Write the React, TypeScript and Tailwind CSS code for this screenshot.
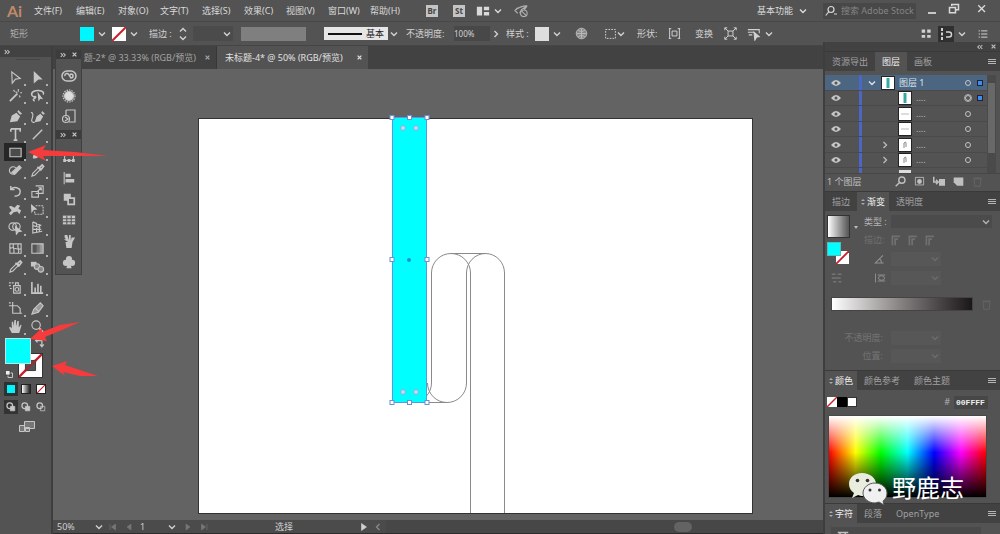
import { FC, ReactNode } from 'react'
import clsx from 'clsx'

interface IconProps {
  className?: string
  children?: ReactNode
}

const Icon: FC<IconProps> = ({ className = 'size-4', children }) => (
  <svg viewBox="0 0 16 16" className={clsx('shrink-0', className)} fill="none" stroke="currentColor" strokeWidth="1.2" aria-hidden="true">
    {children}
  </svg>
)

const Chevron: FC<{ className?: string }> = ({ className }) => (
  <svg viewBox="0 0 8 8" className={clsx('size-2 shrink-0', className)} fill="none" stroke="currentColor" strokeWidth="1.4" aria-hidden="true">
    <path d="M1 2.5l3 3 3-3" />
  </svg>
)

const DoubleChevron: FC<{ className?: string }> = ({ className }) => (
  <svg viewBox="0 0 8 8" className={clsx('size-1.5 shrink-0', className)} fill="none" stroke="currentColor" strokeWidth="1.4" aria-hidden="true">
    <path d="M1 1.5l2.500 2.500L1 6.500M4.500 1.500L7 4 4.500 6.500" />
  </svg>
)

const Cross: FC = () => (
  <svg viewBox="0 0 8 8" className="size-[5px] shrink-0" stroke="currentColor" strokeWidth="2" aria-hidden="true">
    <path d="M1 1l6 6M7 1L1 7" />
  </svg>
)

const MenuLines: FC<{ label: string }> = ({ label }) => (
  <button aria-label={label} className="ml-auto mr-1 text-[#b5b5b5]">
    <svg viewBox="0 0 8 8" className="size-2" stroke="currentColor" strokeWidth="1" aria-hidden="true">
      <path d="M0 1.5h8M0 3.5h8M0 5.5h8" />
    </svg>
  </button>
)

const NoneSwatch: FC<{ className?: string }> = ({ className }) => (
  <svg viewBox="0 0 14 14" className={clsx('block bg-white', className)} aria-hidden="true">
    <path d="M0 14L14 0" stroke="#c8202c" strokeWidth="2" />
  </svg>
)

interface SelectBoxProps {
  label: string
  value: string
  className?: string
}

const SelectBox: FC<SelectBoxProps> = ({ label, value, className }) => (
  <span className={clsx('relative block shrink-0', className)}>
    <select aria-label={label} className="block h-full w-full appearance-none bg-transparent pl-1 outline-none">
      <option>{value}</option>
    </select>
    <Chevron className="pointer-events-none absolute right-0.5 top-1/2 -translate-y-1/2" />
  </span>
)

const menus = ['文件(F)', '编辑(E)', '对象(O)', '文字(T)', '选择(S)', '效果(C)', '视图(V)', '窗口(W)', '帮助(H)']

const MenuBar = () => (
  <header className="flex h-[22px] shrink-0 items-center border-b border-[#484848] text-[#dadada]">
    <span className="w-[30px] pl-[7px] font-[Lato] text-base font-bold leading-5 text-[#c08a68]">Ai</span>
    <nav className="flex">
      {menus.map((menu) => (
        <button key={menu} className="w-[42px] whitespace-nowrap pl-1 text-left">{menu}</button>
      ))}
    </nav>
    <div className="ml-[18px] flex items-center">
      <button className="mr-[15px] size-3 bg-[#c4c4c4] text-[8px] font-bold leading-3 text-[#444]">Br</button>
      <button className="mr-[11px] size-3 bg-[#c4c4c4] text-[8px] font-bold leading-3 text-[#444]">St</button>
      <button aria-label="排列文档" className="flex items-center gap-1">
        <Icon className="size-[14px]">
          <path d="M1 3h6v10H1zM9 3h6v4H9zM9 9h6v4H9z" fill="currentColor" stroke="none" />
        </Icon>
        <Chevron />
      </button>
      <button aria-label="GPU 性能" className="ml-3 text-[#b0b0b0]">
        <Icon className="size-[15px]">
          <path d="M1 8c3-3 8-5 13-5M4 5L1 8l3 3M6 11l2-4 6-4-3 4" />
          <circle cx="10.500" cy="11" r="3.500" />
          <path d="M8 8.500l5 5" />
        </Icon>
      </button>
    </div>
    <button className="ml-auto flex items-center gap-1.5">基本功能 <Chevron /></button>
    <label className="ml-4 flex h-4 w-[93px] items-center bg-[#484848] pl-0.5">
      <Icon className="size-3">
        <circle cx="8" cy="6" r="4" strokeWidth="1.6" />
        <path d="M5 9l-4 5M12 12h4" strokeWidth="1.6" />
      </Icon>
      <input aria-label="搜索" placeholder="搜索 Adobe Stock" className="ml-1 w-[74px] bg-transparent text-[9px] outline-none placeholder:text-[#848484]" />
    </label>
    <div className="ml-3 flex w-[72px] items-center gap-3">
      <button aria-label="最小化" className="pt-1"><span className="block h-0.5 w-2 bg-[#c8c8c8]" /></button>
      <button aria-label="还原" className="pb-1"><Icon className="size-3"><path d="M5 4V2h9v7h-3M2 6h8v7H2z" strokeWidth="2" /></Icon></button>
      <button aria-label="关闭" className="ml-1 pb-1"><Icon className="size-3"><path d="M3 3l9 9M12 3l-9 9" strokeWidth="1.8" /></Icon></button>
    </div>
  </header>
)

const OptionsBar = () => (
  <div className="flex h-6 shrink-0 items-center border-b border-[#454545] text-[#d2d2d2]">
    <span className="w-[80px] pl-2.5 text-[#b0b0b0]">矩形</span>
    <button aria-label="填色" className="flex w-8 items-center gap-1"><span className="size-[14px] bg-[#00f6ff]" /><Chevron /></button>
    <button aria-label="描边颜色" className="flex w-[37px] items-center gap-1"><NoneSwatch className="size-[14px]" /><Chevron /></button>
    <span className="w-[28px] whitespace-nowrap">描边 :</span>
    <button aria-label="描边粗细步进" className="flex w-3 flex-col items-center"><Chevron className="rotate-180" /><Chevron /></button>
    <SelectBox label="描边粗细" value="" className="ml-1 h-[15px] w-[40px] bg-[#4b4b4b]" />
    <span className="ml-2 mr-[18px] h-[14px] w-[65px] bg-[#7f7f7f]" />
    <button className="flex h-[13px] w-16 items-center gap-1 bg-[#e6e6e6] px-1 text-[#222]">
      <span className="h-0.5 flex-1 bg-[#111]" />基本
    </button>
    <Chevron className="ml-0.5 mr-2" />
    <span className="w-12 whitespace-nowrap">不透明度:</span>
    <input aria-label="不透明度" defaultValue="100%" className="h-[15px] w-9 bg-[#484848] text-[8px] outline-none" />
    <Chevron className="ml-0.5 -rotate-90" />
    <span className="ml-1.5 w-[29px]">样式 :</span>
    <button aria-label="图形样式" className="flex items-center gap-1"><span className="size-[14px] bg-[#dedede]" /><Chevron /></button>
    <button aria-label="重新着色" className="ml-[14px] text-[#b8b8b8]">
      <Icon className="size-[13px]">
        <circle cx="8" cy="8" r="6.500" fill="#8a8a8a" />
        <path d="M8 2v12M2 8h12M4 4c3 2 5 2 8 0M4 12c3-2 5-2 8 0" />
      </Icon>
    </button>
    <button aria-label="对齐" className="ml-4 flex items-center">
      <Icon className="size-[13px]"><path d="M2 3h12v11H2z" strokeDasharray="2 1.500" /></Icon><Chevron />
    </button>
    <span className="ml-3 w-[31px] whitespace-nowrap">形状:</span>
    <Icon className="size-[13px]"><path d="M1 2h3M12 2h3M1 14h3M12 14h3M2 2v12M14 2v12" /><path d="M5 5h6v6H5z" /></Icon>
    <span className="ml-3.5 w-[29px]">变换</span>
    <Icon className="size-[13px]"><path d="M5 5h6v6H5zM1 1l4 4M15 1l-4 4M1 15l4-4M15 15l-4-4M1 4V1h3M12 1h3v3M1 12v3h3M12 15h3v-3" /></Icon>
    <button aria-label="选择类似对象" className="ml-2.5 flex items-center gap-1">
      <Icon className="size-[14px]"><path d="M1 6h7M1 3h13v4M2 9h4" /><path d="M8 6l6 5-3 .5L9 15z" fill="currentColor" /></Icon><Chevron />
    </button>
    <div className="ml-auto flex items-center pb-1 pt-1">
      <Icon className="size-[11px]"><path d="M1 2h5v5H1zM9 2h5v5H9zM1 10h5v4H1zM9 10h5v4H9z" fill="currentColor" stroke="none" /></Icon>
      <button aria-label="对齐像素" className="ml-1.5 size-4 bg-[#303030]">
        <Icon><path d="M4 2v12" strokeWidth="2" strokeDasharray="3 1.500" /><path d="M8 6h3a2 2 0 010 5H8" strokeWidth="1.5" /></Icon>
      </button>
      <Chevron className="ml-1" />
      <span className="ml-3 mr-3"><Icon className="size-[10px]"><path d="M1 3h2M5 3h10M1 8h2M5 8h10M1 13h2M5 13h10" strokeWidth="1.6" /></Icon></span>
    </div>
  </div>
)

interface Tool {
  name: string
  icon: ReactNode
  active?: boolean
}

const solid = { fill: 'currentColor', stroke: 'none' }

const toolGroups: Tool[][] = [
  [
    { name: '选择工具', icon: <path d="M4 2l9 7-5 .7L4.500 14z" /> },
    { name: '直接选择工具', icon: <path d="M4 1l9.500 9H9l-5 4.500z" {...solid} /> },
    { name: '魔棒工具', icon: <><path d="M2 14l8-8" strokeWidth="1.8" /><path d="M11 1v3M13 5h2M6 2l1 2M12 8l1 2M8 4l2 1" /></> },
    { name: '套索工具', icon: <><path d="M5 10C0 8 1 4 6 3s10 1 8 4M4 10c2-2 3 0 1 1s-2 2 0 3" strokeWidth="1.6" /><path d="M8 4l6 8-3-.5-2 3z" {...solid} /></> },
  ],
  [
    { name: '钢笔工具', icon: <path d="M2 14l2-7 5-3 4 4-3 5zM10 3l1-2 4 4-2 1z" {...solid} /> },
    { name: '曲率工具', icon: <><path d="M5 14l2-6 4-3 3 3-3 5zM12 4l1-2 3 3-2 1z" {...solid} /><path d="M1 4c3-1 2 5 1 7s1 4 3 3" /></> },
    { name: '文字工具', icon: <path d="M3 2h10v3M3 5V2M8 2v12M6 14h4" strokeWidth="1.7" /> },
    { name: '直线段工具', icon: <path d="M3 13L13 3" strokeWidth="1.5" /> },
    { name: '矩形工具', icon: <path d="M2 3.500h12v9H2z" fill="#4b4b4b" />, active: true },
    { name: '画笔工具', icon: <path d="M3 14c0-4 2-5 4-4l6-8 2 1-6 9c-1 2-3 3-6 2z" {...solid} /> },
    { name: 'Shaper 工具', icon: <><circle cx="5.500" cy="8" r="4" /><path d="M4 10l3 2 7-7-2-2z" fill="currentColor" /></> },
    { name: '橡皮擦工具', icon: <><path d="M2 14l1-3 6-6 2 2-6 6z" /><path d="M8 4l4 4M10 5l3-3 1.500 1.500L12 7z" strokeWidth="1.8" /></> },
  ],
  [
    { name: '旋转工具', icon: <path d="M3 2v4h4M3 6c3-4 10-2 10 2s-3 5-6 5" strokeWidth="1.5" /> },
    { name: '比例缩放工具', icon: <path d="M2 8h7v6H2zM6 2h8v8H6M8 8l4-4M9 4h3v3" /> },
    { name: '宽度工具', icon: <path d="M1 5c3-2 4 1 6 1l3-3 3 1-2 3 3 2-2 4-2-3-4 1-3 3-2-2 3-3z" {...solid} /> },
    { name: '自由变换工具', icon: <><path d="M1 2l7 6-4 .5L1.500 12z" {...solid} /><path d="M6 4h8v9H5V9" strokeDasharray="2 1" /></> },
    { name: '形状生成器工具', icon: <><circle cx="5" cy="7" r="4" /><circle cx="9" cy="7" r="4" /><path d="M8 7l6 5-3 .5L9 15z" fill="currentColor" /></> },
    { name: '透视网格工具', icon: <path d="M3 2v12l10-2M3 2l9 4M3 6l8 2M3 10h9M7 3v10M10 5v7" /> },
  ],
  [
    { name: '网格工具', icon: <path d="M2 3h12v10H2zM2 8c4-3 8 3 12 0M6 3c-2 4 2 6 0 10M11 3c-2 4 2 6 0 10" /> },
    { name: '渐变工具', icon: <><path d="M2 3h6v10H2z" fill="#555" stroke="none" /><path d="M7 3h3v10H7z" fill="#777" stroke="none" /><path d="M10 3h4v10h-4z" fill="#999" stroke="none" /><path d="M2 3h12v10H2z" /></> },
    { name: '吸管工具', icon: <><path d="M2 14l1-3 6-6 2 2-6 6z" /><path d="M8 4l4 4M10 5l3-3 1.500 1.500L12 7z" strokeWidth="1.800" /></> },
    { name: '混合工具', icon: <><path d="M1 3h6v5H1z" {...solid} /><circle cx="7.500" cy="8" r="3" fill="#888" /><circle cx="11.500" cy="11" r="3" fill="#888" /></> },
  ],
  [
    { name: '符号喷枪工具', icon: <><path d="M6 6h7v8H6zM8 6V3h3v3" /><circle cx="9.500" cy="10" r="2" /><path d="M1 3h2M4 3h2M1 6h2M2 9h2" /></> },
    { name: '柱形图工具', icon: <path d="M2 2v12h12M5.500 13V8M8.500 13V4M11.500 13V6" strokeWidth="1.700" /> },
  ],
  [
    { name: '画板工具', icon: <path d="M5 1v12h10M1 5h9l3 3v5M1 2h2" /> },
    { name: '切片工具', icon: <path d="M2 14l2-5 7-7 3 3-5 7zM6 8l3 3" fill="#999" /> },
    { name: '抓手工具', icon: <path d="M4 15L1 9l1.500-.5L4 10V3h1.500v5L7 1h1.500v7L10 2h1.500v7l2-3 1 .5L12 15z" {...solid} /> },
    { name: '缩放工具', icon: <><circle cx="6.500" cy="6.500" r="4.500" /><path d="M10 10l4 4" strokeWidth="2" /></> },
  ],
]

const ToolButton: FC<{ tool: Tool }> = ({ tool }) => (
  <button aria-label={tool.name} className={clsx('relative flex h-[18px] w-[22px] items-center justify-center', tool.active && 'bg-[#262626]')}>
    <Icon className="size-[15px]">{tool.icon}</Icon>
    <span className="absolute bottom-0 right-0 size-0.5 bg-[#b0b0b0]" />
  </button>
)

const Toolbox = () => (
  <aside className="flex w-[53px] shrink-0 flex-col border-r-2 border-[#3e3e3e] text-[#c6c6c6]">
    <div className="flex h-[11px] shrink-0 items-center bg-[#424242] pl-1"><DoubleChevron /></div>
    <div className="mb-2 ml-4 mt-0.5 h-px w-6 bg-[#464646]" />
    <div className="flex flex-col gap-[3px] pl-1">
      {toolGroups.map((group) => (
        <div key={group[0].name} className="grid w-11 grid-cols-2">
          {group.map((tool) => <ToolButton key={tool.name} tool={tool} />)}
        </div>
      ))}
    </div>
    <div className="relative ml-[5px] mt-[3px] h-10 w-10">
      <button aria-label="描边" className="absolute bottom-0 right-0.5 size-[25px] border border-[#333] bg-white">
        <svg viewBox="0 0 25 25" className="block size-full" aria-hidden="true">
          <path d="M0 25L25 0" stroke="#c8202c" strokeWidth="2.500" />
          <path d="M7 7h11v11H7z" fill="#535353" stroke="#333" />
          <path d="M7 18L18 7" stroke="#9c2b32" strokeWidth="2.500" />
        </svg>
      </button>
      <button aria-label="填色" className="absolute left-0 top-0 size-[26px] border border-[#b8e8e8] bg-[#00ffff]" />
      <button aria-label="互换填色和描边" className="absolute right-0 top-0"><Icon className="size-[10px]"><path d="M2 4h9v9M4 1L1 4l3 3M8 10l3 4 3-4" strokeWidth="2" /></Icon></button>
      <button aria-label="默认填色和描边" className="absolute bottom-0 left-0"><Icon className="size-2"><path d="M6 6h9v9H6z" strokeWidth="2" /><path d="M1 1h9v9H1z" fill="#eee" stroke="#222" /></Icon></button>
    </div>
    <div className="mt-1 flex gap-px pl-1">
      <button aria-label="颜色" className="size-[14px] bg-[#303030] p-[3px]"><span className="block size-full bg-[#00f6ff]" /></button>
      <button aria-label="渐变" className="size-[14px] p-0.5"><span className="block size-full border border-[#222] bg-linear-to-r from-white to-[#222]" /></button>
      <button aria-label="无" className="size-[14px] p-0.5"><NoneSwatch className="size-full border border-[#222]" /></button>
    </div>
    <div className="mt-1 flex gap-px pl-1">
      {['正常绘图', '背面绘图', '内部绘图'].map((mode, i) => (
        <button key={mode} aria-label={mode} className={clsx('size-[14px] p-0.5', i === 0 && 'bg-[#333]')}>
          <Icon className="size-[10px]"><circle cx="6" cy="6" r="4.500" strokeWidth="2" /><path d="M7 7h7v7H7z" fill={i === 2 ? 'none' : 'currentColor'} /></Icon>
        </button>
      ))}
    </div>
    <button aria-label="更改屏幕模式" className="ml-[18px] mt-1.5">
      <svg viewBox="0 0 18 13" className="h-[13px] w-[18px]" fill="#777" stroke="currentColor" aria-hidden="true">
        <path d="M6.500 1.500h10v7h-10zM1.500 5.500h5v6h-5zM7.500 7.500h4v4h-4z" />
      </svg>
    </button>
  </aside>
)

const dockTop: Tool[] = [
  { name: '库', icon: <><rect x="1" y="3" width="14" height="10" rx="5" strokeWidth="1.5" /><path d="M4 8a2 2 0 014-1l2 3a2 2 0 000-4L8 8" strokeWidth="1.5" /></> },
  { name: '外观', icon: <><circle cx="8" cy="8" r="6" strokeDasharray="1.500 1" /><circle cx="8" cy="8" r="4.500" fill="#ddd" /></> },
  { name: '资源', icon: <><path d="M5 2h9v12H8M5 2v6" /><circle cx="5" cy="11" r="3.500" /><path d="M4 9l3 2-3 2" /></> },
]

const dockBottom: Tool[] = [
  { name: '变换', icon: <path d="M3 4h10v8H3zM2 3h2v2H2zM12 3h2v2h-2zM2 11h2v2H2zM12 11h2v2h-2zM7 3h2v2H7zM7 11h2v2H7z" /> },
  { name: '对齐', icon: <><path d="M2.500 1v14" /><path d="M4 3h6v4H4zM4 9h10v4H4z" {...solid} /></> },
  { name: '路径查找器', icon: <><path d="M2 2h8v8H2z" {...solid} /><path d="M7 7h7v7H7z" fill="#555" strokeWidth="2" /></> },
  { name: '色板', icon: <><path d="M1 3h14v10H1z" {...solid} /><path d="M1 6.500h14M1 10h14M5.500 3v10M10.500 3v10" stroke="#555" /></> },
  { name: '画笔', icon: <path d="M4 9h8l-1 7H5zM7 9L3 4V1h3l2 6V1h2v7l1-4h4l-3 5M2 6h3l2 3z" {...solid} /> },
  { name: '符号', icon: <><circle cx="8" cy="4.500" r="3.500" {...solid} /><circle cx="4.500" cy="9" r="3.500" {...solid} /><circle cx="11.500" cy="9" r="3.500" {...solid} /><path d="M7 8h2l2 7H5z" {...solid} /></> },
]

const DockHeader = () => (
  <div className="flex h-[9px] items-center justify-between bg-[#3c3c3c] px-1">
    <DoubleChevron /><Cross />
  </div>
)

const Dock = () => (
  <div className="absolute left-0.5 top-[3px] flex w-[27px] flex-col border border-[#404040] bg-[#535353] text-[#c6c6c6]">
    <DockHeader />
    <div className="flex flex-col items-center gap-1 pb-1.5 pt-[9px]">
      {dockTop.map((item) => <button key={item.name} aria-label={item.name} className="flex h-4 items-center"><Icon>{item.icon}</Icon></button>)}
    </div>
    <DockHeader />
    <div className="flex flex-col items-center gap-[5px] pb-1 pt-[10px]">
      {dockBottom.map((item) => <button key={item.name} aria-label={item.name} className="flex h-4 items-center"><Icon className="size-[14px]">{item.icon}</Icon></button>)}
    </div>
  </div>
)

const handles = [[194.5, -0.5], [212, -0.5], [229.5, -0.5], [194.5, 141.5], [229.5, 141.5], [194.5, 284.5], [212, 284.5], [229.5, 284.5]]
const widgets = [[205, 10], [218, 10], [205, 274], [218, 274]]

const Artboard = () => (
  <svg width="555" height="396" viewBox="0 0 555 396" className="absolute left-[145px] top-[49px] overflow-visible" role="img" aria-label="画板 1">
    <rect x="0.5" y="0.5" width="554" height="395" fill="#fff" stroke="#333" />
    <g fill="none" stroke="#8a8a8a">
      <path d="M229.500 265A19.500 19.500 0 0 0 268.500 265V155A19 19.500 0 0 1 306.500 155V395" />
      <path d="M272.500 395V155A19.500 19.500 0 0 0 233.500 155V265A19.500 19.500 0 0 1 214 284.500" />
      <path d="M214 284.500H249M253 135.500H288" />
    </g>
    <rect x="194.500" y="-0.500" width="34" height="285" fill="#00ffff" stroke="#4f9ce0" />
    {handles.map(([x, y]) => <rect key={`${x} ${y}`} x={x - 2.5} y={y - 2} width="4" height="4" fill="#fff" stroke="#6f8fd0" />)}
    {widgets.map(([x, y]) => <circle key={`${x} ${y}`} cx={x} cy={y} r="2.500" fill="#b8dcf4" stroke="#7cb4e0" />)}
    <circle cx="211" cy="142" r="2" fill="#1894d8" />
  </svg>
)

const DocumentArea = () => (
  <main className="relative flex min-w-0 flex-1 flex-col">
    <div className="flex h-[23px] shrink-0 bg-[#424242] text-[#a4a4a4]">
      <div className="flex w-[164px] items-center justify-end border-r border-[#383838] pr-1.5">
        <button className="whitespace-nowrap">题-2* @ 33.33% (RGB/预览)</button>
        <button aria-label="关闭" className="ml-[9px]"><Cross /></button>
      </div>
      <div className="flex w-[151px] items-center bg-[#535353] pl-2 text-[#e2e2e2]">
        <button className="whitespace-nowrap">未标题-4* @ 50% (RGB/预览)</button>
        <button aria-label="关闭" className="ml-auto mr-1.5"><Cross /></button>
      </div>
    </div>
    <div className="relative min-h-0 flex-1 overflow-hidden bg-[#636363]">
      <Artboard />
    </div>
    <footer className="flex h-[14px] shrink-0 items-center border-b border-[#2c2c2c] bg-[#4b4b4b] text-[#d0d0d0]">
      <SelectBox label="缩放" value="50%" className="h-3 w-[52px] text-[9px]" />
      <div className="flex w-[31px] justify-center gap-2 text-[#777]">
        <button aria-label="首项"><Icon className="size-2"><path d="M2 2v12M13 2v12L5 8z" fill="currentColor" /></Icon></button>
        <button aria-label="上一项"><Icon className="size-2"><path d="M12 2v12L4 8z" fill="currentColor" /></Icon></button>
      </div>
      <SelectBox label="画板" value="1" className="h-3 w-[42px] text-[9px]" />
      <div className="flex w-9 justify-center gap-2 text-[#777]">
        <button aria-label="下一项"><Icon className="size-2"><path d="M4 2v12l8-6z" fill="currentColor" /></Icon></button>
        <button aria-label="末项"><Icon className="size-2"><path d="M3 2v12l8-6zM14 2v12" fill="currentColor" /></Icon></button>
      </div>
      <span className="ml-[61px] w-[85px]">选择</span>
      <button aria-label="状态"><Icon className="size-2"><path d="M3 1v14l10-7z" fill="currentColor" /></Icon></button>
      <Chevron className="ml-1.5 rotate-90 text-[#888]" />
      <div className="ml-1 flex h-full flex-1 items-center bg-[#474747]">
        <span className="flex-11" />
        <span className="h-2.5 w-[18px] rounded-full bg-[#636363]" />
        <span className="flex-5" />
      </div>
    </footer>
    <Dock />
  </main>
)

const PanelTabs: FC<{ tabs: string[]; active: number; grip?: boolean }> = ({ tabs, active, grip }) => (
  <div className="flex h-5 shrink-0 items-center border-t border-[#3a3a3a] bg-[#424242] text-[#a0a0a0]">
    {tabs.map((tab, i) => (
      <button key={tab} className={clsx('flex h-full items-center gap-0.5 whitespace-nowrap', i === active ? 'bg-[#535353] text-[#efefef]' : '', i === active && grip ? 'px-1' : 'px-[7px]')}>
        {i === active && grip && <svg viewBox="0 0 4 8" className="h-2 w-1" fill="#aaa" aria-hidden="true"><path d="M0 3l2-2 2 2zM0 5l2 2 2-2z" /></svg>}
        {tab}
      </button>
    ))}
    <MenuLines label="面板菜单" />
  </div>
)

const layers = [
  { name: '图层 1', art: 'bar', root: true, square: true },
  { name: '....', art: 'bar', square: true },
  { name: '....', art: 'line' },
  { name: '....', art: 'line' },
  { name: '....', art: 'curve', group: true },
  { name: '....', art: 'curve', group: true },
]

const Thumb: FC<{ art: string }> = ({ art }) => (
  <svg viewBox="0 0 12 12" className="size-3 shrink-0 bg-white outline outline-[#222]" aria-hidden="true">
    {art === 'bar' && <path d="M6 1v10" stroke="#35aaa0" strokeWidth="3" />}
    {art === 'line' && <path d="M2 6h8" stroke="#bbb" />}
    {art === 'curve' && <path d="M5 9V4q2-2 2 0v4" stroke="#888" fill="none" />}
  </svg>
)

const LayersPanel = () => (
  <section>
    <PanelTabs tabs={['资源导出', '图层', '画板']} active={1} />
    <div className="mt-1 flex h-[99px] overflow-hidden border-b border-[#474747]">
      <ul className="flex-1">
        {layers.map((layer, i) => (
          <li key={i} className={clsx('flex items-center border-b border-[#4a4a4a]', i % 2 ? 'h-[15px]' : 'h-4', layer.root ? 'bg-[#4c6580] text-[#d8e4ee]' : 'text-[#b8b8b8]')}>
            <button aria-label="切换可视性" className="w-[34px] pl-1.5">
              <svg viewBox="0 0 10 6" className="h-1.5 w-2.5" aria-hidden="true"><path d="M0 3q5-6 10 0-5 6-10 0z" fill="#c8c8c8" /><circle cx="5" cy="3" r="1.500" fill="#555" /></svg>
            </button>
            <span className="h-full w-[3px] bg-[#4a66c8]" />
            <span className={clsx('flex justify-end pr-1.5', layer.root ? 'w-5' : 'w-[37px]')}>
              {(layer.root || layer.group) && <Chevron className={layer.root ? '' : 'mr-1 -rotate-90'} />}
            </span>
            <Thumb art={layer.art} />
            <span className="ml-[5px] flex-1">{layer.name}</span>
            <span className={clsx('size-1.5 rounded-full border border-[#c4c4c4]', i === 1 && 'outline outline-[#b0b0b0]')} />
            <span className={clsx('ml-1.5 mr-1 size-[6px]', layer.square && 'border border-[#223] bg-[#3d8cf0]')} />
          </li>
        ))}
        <li className="flex h-[15px]"><span className="ml-[34px] w-[3px] bg-[#4a66c8]" /><span className="ml-[37px] mt-0.5 size-3 bg-[#ddd]" /></li>
      </ul>
      <div className="mr-1 w-[9px] bg-[#4a4a4a] px-px pb-5 pt-2"><div className="h-full bg-[#686868]" /></div>
    </div>
    <div className="flex h-[15px] items-center gap-2 pl-0.5 text-[#c0c0c0]">
      <span className="w-[60px]">1 个图层</span>
      <button aria-label="定位对象"><Icon className="size-[11px]"><circle cx="10" cy="6" r="4.500" strokeWidth="2" /><path d="M7 9l-6 6" strokeWidth="2" /></Icon></button>
      <button aria-label="剪切蒙版"><Icon className="size-[11px]"><path d="M2 2h12v11H2z" /><circle cx="8" cy="8" r="3.500" {...solid} /></Icon></button>
      <button aria-label="新建子图层"><Icon className="size-[12px]"><path d="M1 1v7h5M4 5l3 3-3 3" strokeWidth="2" /><path d="M8 4h8v9H8z" {...solid} /></Icon></button>
      <button aria-label="新建图层"><Icon className="size-[11px]"><path d="M1 2h14v12H6L1 9z" {...solid} /></Icon></button>
      <button aria-label="删除" className="text-[#686868]"><Icon className="size-[11px]"><path d="M3 4h10l-1 11H4zM2 3h12" /></Icon></button>
    </div>
  </section>
)

const fieldClass = 'h-[14px] w-[50px] bg-[#575757] text-[#6c6c6c]'

const GradientPanel = () => (
  <section className="mt-0.5">
    <PanelTabs tabs={['描边', '渐变', '透明度']} active={1} grip />
    <div className="flex h-[82px] pl-0.5 pt-1">
      <div className="w-[31px]">
        <div className="flex items-center gap-1">
          <button aria-label="渐变预览" className="h-[23px] w-[23px] border border-[#333] bg-linear-to-r from-white to-[#555]" />
          <svg viewBox="0 0 4 4" className="size-1" fill="#bbb" aria-hidden="true"><path d="M0 1h4L2 4z" /></svg>
        </div>
        <div className="relative mt-1 h-[22px] w-[22px]">
          <NoneSwatch className="absolute bottom-0 right-0 size-[13px]" />
          <span className="absolute left-0 top-0 size-[14px] border border-[#5bb] bg-[#00ffff]" />
        </div>
        <Icon className="ml-1 mt-2 size-3 text-[#747474]"><path d="M1 3h5M9 3h5M1 8h12M3 13h4M10 13h4" strokeWidth="2" /></Icon>
      </div>
      <div className="flex flex-1 flex-col gap-[5px] text-[#707070]">
        <div className="flex items-center text-[#b4b4b4]"><span className="w-[33px] pl-1.5">类型 :</span><SelectBox label="类型" value="" className="mr-0.5 h-[13px] w-[101px] bg-[#4b4b4b]" /></div>
        <div className="flex h-[14px] items-center"><span className="w-[33px] pl-1.5">描边:</span>
          {['1', '2', '3'].map((n) => <Icon key={n} className="mr-1.5 size-[11px]"><path d="M2 15V2h11M6 15V6h4" strokeWidth="2.500" /></Icon>)}
        </div>
        <div className="flex items-center"><span className="w-[33px] pl-4"><Icon className="size-[11px] text-[#929292]"><path d="M13 2L2 13h12M8 7q3 2 3 6" strokeWidth="1.600" /></Icon></span><SelectBox label="角度" value="" className={fieldClass} /></div>
        <div className="flex items-center"><span className="w-[33px] pl-4"><Icon className="size-3 text-[#929292]"><path d="M2 2v12M5 4h10M5 12h10" /><ellipse cx="10" cy="8" rx="4" ry="3" /></Icon></span><SelectBox label="长宽比" value="" className={fieldClass} /></div>
      </div>
    </div>
    <div className="mt-1 flex items-center pl-1.5">
      <div className="h-[14px] w-[142px] border border-[#444] bg-linear-to-r from-white via-[#858080] to-[#1c1719]" />
      <Icon className="ml-2 size-[11px] text-[#666]"><path d="M3 4h10l-1 11H4zM2 3h12" /></Icon>
    </div>
    <div className="mt-5 flex h-[35px] flex-col gap-1 text-[#747474]">
      <div className="flex items-center"><span className="w-[66px] whitespace-nowrap pr-2 text-right">不透明度:</span><SelectBox label="渐变不透明度" value="" className={fieldClass} /></div>
      <div className="flex items-center"><span className="w-[66px] pr-2 text-right">位置:</span><SelectBox label="位置" value="" className={fieldClass} /></div>
    </div>
  </section>
)

const ColorPanel = () => (
  <section className="mt-1">
    <PanelTabs tabs={['颜色', '颜色参考', '颜色主题']} active={0} grip />
    <div className="flex h-6 items-center pl-0.5 pr-3">
      <NoneSwatch className="h-2.5 w-2.5" />
      <button aria-label="黑色" className="h-2.5 w-2.5 bg-black" />
      <button aria-label="白色" className="h-2.5 w-2.5 border border-[#333] bg-white" />
      <label className="ml-auto flex items-center gap-1 text-[#b0b0b0]">#
        <input aria-label="十六进制颜色" defaultValue="00FFFF" className="h-[13px] w-[34px] bg-[#474747] pl-0.5 font-['Liberation_Mono',monospace] text-[8px] font-bold text-[#eee] outline-none" />
      </label>
    </div>
    <div className="ml-[3px] mr-[13px] mt-px h-[83px] border border-[#484848] bg-[linear-gradient(to_bottom,#fff_0%,transparent_45%,#000_100%),linear-gradient(to_right,#f00,#ff0_17%,#0f0_33%,#0ff_50%,#00f_67%,#f0f_84%,#f00)]" />
  </section>
)

const Watermark = () => (
  <div className="absolute bottom-[29px] left-[23px] flex items-center gap-1 text-white">
    <svg viewBox="0 0 40 34" className="h-[34px] w-10" aria-hidden="true">
      <path d="M14 2C6 2 1 7 1 13c0 4 2 7 5 9l-2 5 6-3c2 1 5 1 7 1 7-1 11-6 11-12S22 2 14 2z" fill="#e9eddf" />
      <path d="M27 12c-7 0-12 5-12 10s5 10 12 10l4-1 5 3-1-4c3-2 4-5 4-8 0-5-5-10-12-10z" fill="#f0f0f0" stroke="#555" strokeWidth="1" />
      <g fill="#333"><circle cx="9.500" cy="9.500" r="1.800" /><circle cx="19.500" cy="9.500" r="1.800" /><circle cx="22" cy="19" r="1.500" /><circle cx="31.500" cy="19" r="1.500" /></g>
    </svg>
    <span className="whitespace-nowrap text-2xl leading-7">野鹿志</span>
  </div>
)

const SidePanels = () => (
  <aside className="relative -mt-1 flex w-[177px] shrink-0 flex-col overflow-hidden border-l-2 border-[#3e3e3e] bg-[#535353]">
    <div className="flex h-[9px] shrink-0 items-center justify-end gap-2 bg-[#424242] pr-1 text-[#bbb]"><DoubleChevron className="rotate-180" /><Cross /></div>
    <LayersPanel />
    <GradientPanel />
    <ColorPanel />
    <section className="mt-[5px]">
      <PanelTabs tabs={['字符', '段落', 'OpenType']} active={0} grip />
      <button aria-label="修饰文字工具" className="ml-1.5 mt-1 flex h-4 w-[150px] bg-[#4a4a4a] pl-1.5 pt-1 text-[#c0c0c0]">
        <Icon className="size-3"><path d="M1 2h14M4 2v12M11 2v12" strokeWidth="2" /></Icon>
      </button>
    </section>
    <Watermark />
  </aside>
)

// annotation arrows over the toolbox
const Arrows = () => (
  <svg width="115" height="250" viewBox="0 0 115 250" className="pointer-events-none absolute left-0 top-[89px]" fill="#f53b3b" aria-hidden="true">
    <path d="M28 17L46 10 43 15 75 17 108 21 75 21 43 21 46 26z" />
    <path d="M30 204L42 193 42 197 60 190 80 187 62 195 45 202 47 206z" />
    <path d="M52 231L67 226 65 230 80 235 98 241 80 241 63 237 65 241z" />
  </svg>
)

const App = () => {
  return (
    <div className="flex h-screen min-h-[534px] flex-col overflow-hidden bg-[#535353] font-['Noto_Sans','Noto_Sans_CJK_SC',sans-serif] text-[9px] leading-3">
      <MenuBar />
      <OptionsBar />
      <div className="relative flex min-h-0 flex-1">
        <Toolbox />
        <DocumentArea />
        <SidePanels />
        <Arrows />
      </div>
    </div>
  )
}

export default App
